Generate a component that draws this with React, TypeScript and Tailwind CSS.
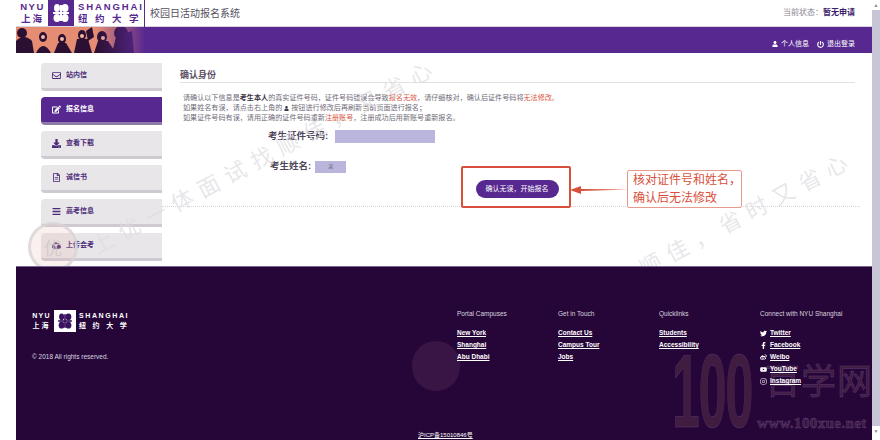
import React from "react";
import {
  FaRegEnvelope, FaEdit, FaDownload, FaRegFileAlt, FaBars, FaCloudUploadAlt, FaUser, FaPowerOff,
  FaTwitter, FaFacebookF, FaWeibo, FaYoutube, FaInstagram,
} from "react-icons/fa";

const CJK = "font-['Liberation_Sans','Noto_Sans_CJK_SC',sans-serif]";
const COMMA = "\uFF0C";
const COLON = "\uFF1A";
const SEMI = "\uFF1B";

function Mark({ bg, fg, size }: { bg: string; fg: string; size: number }) {
  return (
    <svg width={size} height={size} viewBox="0 0 26 26" className="shrink-0">
      <rect width="26" height="26" fill={bg} />
      <g fill={fg}>
        <ellipse cx="9" cy="8" rx="3" ry="4" />
        <ellipse cx="17" cy="8" rx="3.5" ry="4" />
        <ellipse cx="9" cy="18" rx="3.5" ry="4" />
        <ellipse cx="17" cy="18" rx="3.5" ry="4" />
        <rect x="5" y="12" width="16" height="2" />
        <rect x="12" y="5" width="2" height="16" />
      </g>
    </svg>
  );
}

function Logo({ footer }: { footer?: boolean }) {
  const text = footer ? "text-white" : "text-[#57288f]";
  return (
    <div className={`flex items-center font-bold ${text} ${footer ? "gap-[3px]" : "gap-[4px]"}`}>
      <div className={`flex flex-col items-center ${footer ? "w-[19px] text-[7px] leading-[10px]" : "w-[23px] text-[9.5px] leading-[12px]"}`}>
        <span className={footer ? "tracking-[1.2px]" : "tracking-[1.5px]"}>NYU</span>
        <span className="tracking-[2px]">上海</span>
      </div>
      {footer ? <Mark bg="#ffffff" fg="#3a1360" size={22} /> : <Mark bg="#57288f" fg="#ffffff" size={26} />}
      <div className={`flex flex-col whitespace-nowrap ${footer ? "w-[52px] text-[7px] leading-[10px]" : "w-[62px] text-[9.5px] leading-[12px]"}`}>
        <span className={footer ? "tracking-[1.6px]" : "tracking-[1.9px]"}>SHANGHAI</span>
        <span className={footer ? "tracking-[6.6px]" : "tracking-[7.5px]"}>纽约大学</span>
      </div>
    </div>
  );
}

function Banner() {
  return (
    <svg width="129" height="26" viewBox="0 0 129 26" className="shrink-0">
      <defs>
        <linearGradient id="fade" x1="0" x2="1">
          <stop offset="0.62" stopColor="#57288f" stopOpacity="0" />
          <stop offset="1" stopColor="#57288f" />
        </linearGradient>
      </defs>
      <rect width="129" height="26" fill="#e58c72" />
      <g fill="#2c1033">
        <ellipse cx="6" cy="6" rx="5" ry="5" />
        <path d="M0 14 Q8 6 16 14 L18 26 L0 26 Z" />
        <ellipse cx="27" cy="10" rx="4" ry="5" />
        <path d="M20 26 Q27 12 35 26 Z" />
        <ellipse cx="46" cy="12" rx="4" ry="5" />
        <path d="M38 26 L42 16 L50 16 L56 26 Z" />
        <ellipse cx="66" cy="8" rx="4" ry="5" />
        <path d="M58 26 L61 12 L72 12 L76 26 Z" />
        <path d="M70 4 L76 0 L78 10 L72 14 Z" />
        <ellipse cx="86" cy="10" rx="5" ry="6" />
        <path d="M78 26 L82 14 L92 14 L100 26 Z" />
        <ellipse cx="105" cy="6" rx="7" ry="7" />
        <path d="M96 26 L100 10 L116 4 L118 26 Z" />
      </g>
      <g fill="#f3b9a4">
        <circle cx="27" cy="10" r="2" />
        <circle cx="46" cy="12" r="2" />
        <circle cx="66" cy="9" r="2" />
        <circle cx="87" cy="11" r="2" />
      </g>
      <rect width="129" height="26" fill="url(#fade)" />
    </svg>
  );
}

const NAV = [
  { label: "站内信", Icon: FaRegEnvelope },
  { label: "报名信息", Icon: FaEdit, active: true },
  { label: "查看下载", Icon: FaDownload },
  { label: "诚信书", Icon: FaRegFileAlt },
  { label: "高考信息", Icon: FaBars },
  { label: "上传会考", Icon: FaCloudUploadAlt },
];

function SideItem({ label, Icon, active }: { label: string; Icon: React.ComponentType<{ className?: string }>; active?: boolean }) {
  return (
    <div
      className={`flex items-center h-[28px] pl-[11px] gap-[5px] rounded-l-[4px] border-b-[3px] text-[7px] font-bold ${
        active ? "bg-[#57288f] border-[#8d7aa8] text-white" : "bg-[#e9e6e9] border-[#cfc9d1] text-[#4a2a78]"
      }`}
    >
      <Icon className="w-[9px] h-[9px]" />
      <span>{label}</span>
    </div>
  );
}

const COLS = [
  { title: "Portal Campuses", links: ["New York", "Shanghai", "Abu Dhabi"] },
  { title: "Get in Touch", links: ["Contact Us", "Campus Tour", "Jobs"] },
  { title: "Quicklinks", links: ["Students", "Accessibility"] },
];

const SOCIAL = [
  { label: "Twitter", Icon: FaTwitter },
  { label: "Facebook", Icon: FaFacebookF },
  { label: "Weibo", Icon: FaWeibo },
  { label: "YouTube", Icon: FaYoutube },
  { label: "Instagram", Icon: FaInstagram },
];

function PageWatermarks() {
  return (
    <div className="absolute left-0 top-0 w-[872px] h-[266px] pointer-events-none overflow-hidden font-['Noto_Sans_CJK_SC',sans-serif] text-[22px] leading-[28px] tracking-[8px] text-[#dedce1]/70 whitespace-nowrap">
      <div className="absolute left-[92px] top-[232px] origin-left -rotate-[28deg]">{`上优一体面试找顺佳${COMMA}又省心`}</div>
      <div className="absolute left-[640px] top-[254px] origin-left -rotate-[28deg]">{`顺佳${COMMA}省时又省心`}</div>
      <div className="absolute left-[28px] top-[222px] w-[50px] h-[50px] rounded-full border-[3px] border-[#d9d4d8]/80 bg-[#e8b8a8]/20 flex items-center justify-center text-[18px] tracking-normal text-[#cfc6c8]/80">
        优
      </div>
    </div>
  );
}

function FooterWatermarks() {
  return (
    <div className="absolute inset-0 pointer-events-none overflow-hidden font-['Noto_Sans_CJK_SC',sans-serif] text-[#3f1c40] [-webkit-text-stroke:0.5px_#5f3d75]">
      <div className="absolute left-[396px] top-[74px] w-[48px] h-[50px] rounded-full bg-[#46204f]/60" />
      <div className="absolute left-[656px] top-[64px] origin-left scale-x-[0.48] font-['Liberation_Sans',sans-serif] font-bold text-[104px] leading-[120px] tracking-[-2px]">
        100
      </div>
      <div className="absolute left-[749px] top-[90px] text-[35px] leading-[44px] tracking-[1px] whitespace-nowrap">
        百学网
      </div>
      <div className="absolute left-[741px] top-[147px] font-['Liberation_Serif',serif] font-bold text-[15px] leading-[18px] tracking-[0.4px] whitespace-nowrap">
        www.100xue.net
      </div>
    </div>
  );
}

export default function App() {
  return (
    <div className={`relative flex w-[880px] h-[440px] overflow-hidden bg-white ${CJK}`}>
      <div className="w-[872px] pl-4 flex flex-col">
        {/* header */}
        <header className="h-[27px] flex items-center pl-[5px] pr-[17px] border-b border-[#d8d3df]">
          <Logo />
          <div className="ml-[4px] h-[27px] border-l border-[#57288f] pl-[5px] flex items-center text-[10px] text-[#55505c]">
            校园日活动报名系统
          </div>
          <div className="ml-auto text-[8px] text-[#8b8792]">
            {`当前状态${COLON}`}<span className="font-bold text-[#3e1f6d]">暂无申请</span>
          </div>
        </header>

        {/* purple bar */}
        <div className="h-[26px] flex items-center bg-[#57288f] text-white text-[7px] pr-[17px]">
          <Banner />
          <div className="ml-auto flex items-center gap-[8px] pt-[8px]">
            <span className="flex items-center gap-[3px]"><FaUser className="w-[6px] h-[6px]" />个人信息</span>
            <span className="flex items-center gap-[3px]"><FaPowerOff className="w-[7px] h-[7px]" />退出登录</span>
          </div>
        </div>

        {/* body */}
        <div className="h-[213px] flex">
          <aside className="w-[146px] shrink-0 pl-[25px] pt-[10px] flex flex-col gap-[6px]">
            {NAV.map((n) => <SideItem key={n.label} {...n} />)}
          </aside>
          <main className="relative flex-1 min-w-0">
            <div className="h-[154px] mr-[12px] border-b border-dotted border-[#d5d3d8] pl-[18px] pt-[17px]">
              <div className="mr-[5px] h-[13px] border-b border-[#e2e0e4] text-[9px] leading-[10px] font-bold text-[#5b5366]">确认身份</div>
              <div className="mt-[10px] pl-[3px] text-[7.1px] leading-[10px] text-[#6f6a78] whitespace-nowrap">
                <p>请确认以下信息是<b className="text-[#3e3548]">考生本人</b>{`的真实证件号码${COMMA}证件号码错误会导致`}<span className="text-[#d9553f]">报名无效</span>{`${COMMA}请仔细核对${COMMA}确认后证件号码将`}<span className="text-[#d9553f]">无法修改。</span></p>
                <p>{`如果姓名有误${COMMA}请点击右上角的 `}<FaUser className="inline w-[5px] h-[5px] text-[#3e3548]" />{` 按钮进行修改后再刷新当前页面进行报名${SEMI}`}</p>
                <p>{`如果证件号码有误${COMMA}请用正确的证件号码重新`}<span className="text-[#d9553f]">注册账号</span>{`${COMMA}注册成功后用新账号重新报名。`}</p>
              </div>
              <div className="mt-[6px] ml-[88px] flex items-center h-[15px] text-[9.5px] font-bold text-[#4e4659]">
                考生证件号码:
                <span className="ml-[7px] w-[100px] h-[13px] bg-[#b9b5dd]" />
              </div>
              <div className="mt-[16px] ml-[90px] flex items-center h-[13px] text-[9.5px] font-bold text-[#4e4659]">
                考生姓名:
                <span className="ml-[4px] w-[31px] h-[12px] bg-[#b9b5dd] flex items-center justify-center text-[5px] font-normal text-[#6f6a78]">菜</span>
              </div>
              <div className="-ml-[18px] mr-[-12px] flex justify-center mt-[7px]">
                <button className="w-[83px] h-[18px] rounded-full bg-[#57288f] text-white text-[7px] font-normal whitespace-nowrap">{`确认无误${COMMA}开始报名`}</button>
              </div>
            </div>
            {/* annotation */}
            <div className="absolute left-[299px] top-[113px] w-[110px] h-[42px] border-2 border-[#d8503c] rounded-[2px]" />
            <svg className="absolute left-[407px] top-[130px]" width="60" height="14" viewBox="0 0 60 14">
              <path d="M59 6.5 L12 6 L12 3 L1 7 L12 11 L12 8 Z" fill="#d8503c" />
            </svg>
            <div className="absolute left-[465px] top-[117px] w-[115px] h-[38px] border border-[#e89a8c] rounded-[2px] bg-white pl-[5px] text-[12px] leading-[18px] text-[#d8503c] whitespace-nowrap flex flex-col justify-center">
              <span>{`核对证件号和姓名${COMMA}`}</span>
              <span>确认后无法修改</span>
            </div>
          </main>
        </div>

        {/* footer */}
        <footer className="relative h-[174px] bg-[#260538] border-t border-[#7a6790] text-white text-[6.5px] flex">
          <FooterWatermarks />
          <div className="relative w-[441px] shrink-0 pl-[16px] pt-[43px]">
            <Logo footer />
            <p className="mt-[21px] leading-[8px] text-[#dcd6e2]">© 2018 All rights reserved.</p>
          </div>
          <div className="relative pt-[42px] flex">
            {COLS.map((c) => (
              <div key={c.title} className="w-[101px]">
                <div className="leading-[10px] text-[#d9d4df]">{c.title}</div>
                <ul className="mt-[9px] flex flex-col gap-[2px] font-bold">
                  {c.links.map((l) => <li key={l} className="leading-[10px] underline">{l}</li>)}
                </ul>
              </div>
            ))}
            <div className="w-[100px]">
              <div className="leading-[10px] text-[#d9d4df] whitespace-nowrap">Connect with NYU Shanghai</div>
              <ul className="mt-[9px] flex flex-col gap-[2px] font-bold">
                {SOCIAL.map(({ label, Icon }) => (
                  <li key={label} className="leading-[10px] flex items-center gap-[3px]">
                    <Icon className="w-[7px] h-[7px]" />
                    <span className="underline">{label}</span>
                  </li>
                ))}
              </ul>
            </div>
          </div>
          <div className="absolute left-[402px] bottom-[1px] text-[6px] leading-[8px] underline">沪ICP备15010846号</div>
        </footer>
      </div>

      {/* scrollbar */}
      <div className="w-2 shrink-0 flex flex-col items-center bg-white text-[5px] leading-[10px] text-[#8a8694]">
        <span className="h-[10px]">▲</span>
        <div className="w-full flex-1 bg-[#c8c6d6]" />
        <span className="h-[14px]">▼</span>
      </div>

      <PageWatermarks />
    </div>
  );
}
